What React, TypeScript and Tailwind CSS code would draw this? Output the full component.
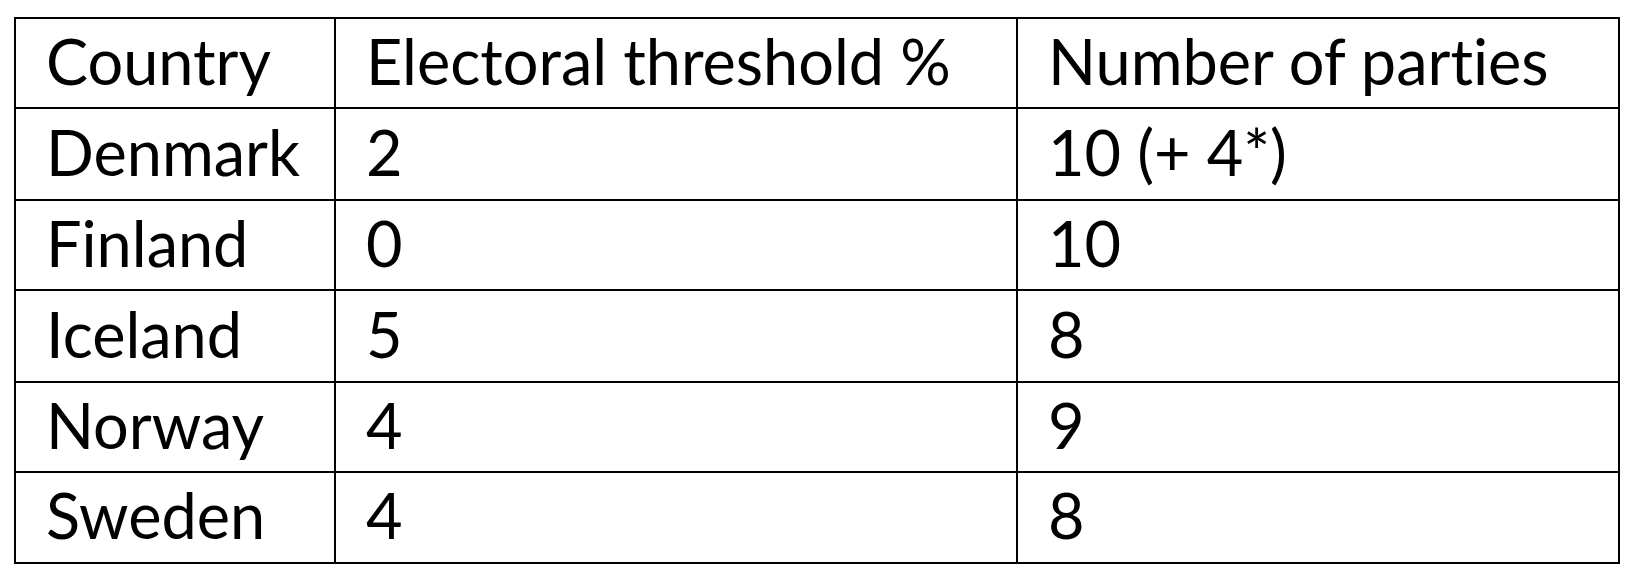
const ROWS: { h: string; cells: string[] }[] = [
  { h: 'h-[88px]', cells: ['Country', 'Electoral threshold %', 'Number of parties'] },
  { h: 'h-[92px]', cells: ['Denmark', '2', '10 (+ 4*)'] },
  { h: 'h-[90px]', cells: ['Finland', '0', '10'] },
  { h: 'h-[92px]', cells: ['Iceland', '5', '8'] },
  { h: 'h-[90px]', cells: ['Norway', '4', '9'] },
  { h: 'h-[91px]', cells: ['Sweden', '4', '8'] },
];

export default function App() {
  return (
    <div className="w-[1634px] h-[580px] bg-white pt-[17px] pl-[14px] text-black font-['Lato',sans-serif] text-[63px] leading-none [font-variant-ligatures:none]">
      <div className="w-[1606px] border-2 border-black">
        {ROWS.map((row, i) => (
          <div key={i} className={`flex ${row.h} ${i > 0 ? 'border-t-2 border-black' : ''}`}>
            <div className="w-[318px] flex items-center pl-[30px] pb-[6px]">{row.cells[0]}</div>
            <div className="w-[682px] flex items-center pl-[30px] pb-[6px] border-l-2 border-black">{row.cells[1]}</div>
            <div className="flex-1 flex items-center pl-[30px] pb-[6px] border-l-2 border-black">{row.cells[2]}</div>
          </div>
        ))}
      </div>
    </div>
  );
}
